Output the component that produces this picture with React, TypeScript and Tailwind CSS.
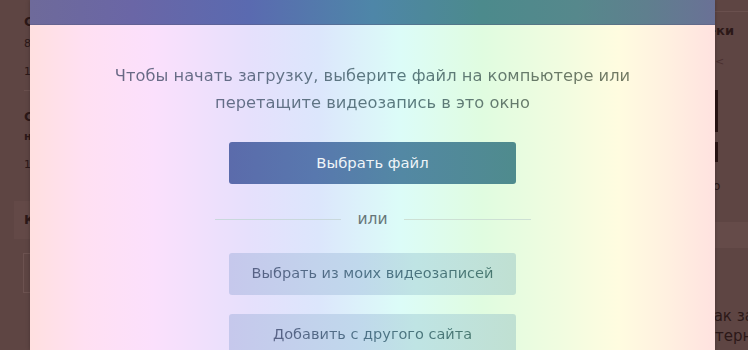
import React from "react";

const font = { fontFamily: '"DejaVu Sans", Verdana, sans-serif' };

export default function App() {
  return (
    <div
      className="relative w-[748px] h-[350px] overflow-hidden bg-[#5e4543]"
      style={font}
    >
      {/* background page (dimmed) */}
      <div className="flex h-full text-[#2c1818] font-bold text-[13px]">
        <div className="w-[300px] shrink-0 pl-[24px] flex flex-col">
          <div className="mt-[14px] leading-[16px]">Сделать видео</div>
          <div className="mt-[8px] leading-[12px] text-[11px] font-normal">8 видеозаписей</div>
          <div className="mt-[16px] leading-[12px] text-[11px] font-normal">1 минута</div>
          <div className="mt-[12px] h-px bg-[#6a504e] w-[200px]" />
          <div className="mt-[18px] leading-[16px]">Совет</div>
          <div className="mt-[6px] leading-[12px] text-[11px]">но как</div>
          <div className="mt-[16px] leading-[12px] text-[11px] font-normal">1 час</div>
          <div className="mt-[30px] h-[38px] bg-[#634947] flex items-center pl-[6px] -ml-[10px]">
            <span className="pl-[4px]">Категории</span>
          </div>
          <div className="mt-[14px] h-[40px] border border-[#6c5250] -ml-[1px]" />
        </div>
        <div className="grow" />
        <div className="w-[60px] shrink-0 flex flex-col">
          <div className="mt-[11px] h-px bg-[#6a504e]" />
          <div className="mt-[12px] pr-[14px] leading-[14px] flex justify-end whitespace-nowrap">
            <span>Медиа-ки</span>
          </div>
          <div className="mt-[18px] pl-[27px] text-[11px] font-normal text-[#4a3030] leading-[12px]">&lt;</div>
          <div className="mt-[22px] pl-[27px] flex flex-col gap-[10px]">
            <div className="w-[3px] h-[42px] bg-[#2a1414]" />
            <div className="w-[3px] h-[20px] bg-[#2a1414]" />
          </div>
          <div className="mt-[18px] pl-[25px] text-[12px] font-normal leading-[12px]">о</div>
          <div className="mt-[30px] h-[26px] bg-[#654b49]" />
          <div className="mt-[58px] pl-[15px] text-[15px] font-normal leading-[20px] whitespace-nowrap">
            Как за
          </div>
          <div className="pl-[6px] text-[15px] font-normal leading-[20px] whitespace-nowrap">
            Интерн
          </div>
        </div>
      </div>

      {/* modal */}
      <div className="absolute left-[30px] top-0 w-[685px] h-[350px] flex flex-col shadow-[0_0_4px_rgba(0,0,0,0.25)]">
        <div className="h-[25px] shrink-0 bg-[linear-gradient(90deg,#6e6a9a_0%,#6a66a6_15%,#5a6ab0_32%,#4e86a8_50%,#4c8a8c_66%,#56888c_80%,#5f7f8e_90%,#6a7196_100%)] border-b border-[#5a5a7a]/40" />
        <div className="grow flex flex-col items-center bg-[linear-gradient(90deg,#ffe0e0_0%,#ffe0f2_8%,#fbe0fc_18%,#e6e0fc_32%,#dce6fc_42%,#dcfcf8_54%,#e0fce0_66%,#f0fce0_77%,#fffce0_86%,#fff0e0_93%,#ffe2e0_100%)]">
          <p className="mt-[37px] text-[16.3px] leading-[27px] text-center bg-[linear-gradient(90deg,#6c6682_0%,#646e88_30%,#587a7e_55%,#687a68_75%,#7a785e_100%)] bg-clip-text text-transparent px-[70px] whitespace-nowrap">
            Чтобы начать загрузку, выберите файл на компьютере или
            <br />
            перетащите видеозапись в это окно
          </p>

          <button className="mt-[26px] w-[287px] h-[42px] shrink-0 rounded-[3px] bg-[linear-gradient(90deg,#5b6bab_0%,#5878ae_30%,#5388a4_60%,#4f8b8d_100%)] text-[#eef4f8] text-[14.8px]">
            Выбрать файл
          </button>

          <div className="mt-[25px] h-[20px] w-[316px] flex items-center gap-[16px]">
            <div className="grow h-px bg-[#c9d8dc]" />
            <span className="text-[15.5px] leading-[20px] text-[#667678]">или</span>
            <div className="grow h-px bg-[#cde0d4]" />
          </div>

          <button className="mt-[24px] w-[287px] h-[42px] shrink-0 rounded-[3px] bg-[linear-gradient(90deg,#c6c8ec_0%,#c0d8ec_45%,#bfe4e4_65%,#c0e0d2_100%)] text-[14.5px]">
            <span className="bg-[linear-gradient(90deg,#586286_0%,#4c7286_50%,#487870_100%)] bg-clip-text text-transparent">
              Выбрать из моих видеозаписей
            </span>
          </button>

          <button className="mt-[19px] w-[287px] h-[42px] shrink-0 rounded-[3px] bg-[linear-gradient(90deg,#c6c8ec_0%,#c0d8ec_45%,#bfe4e4_65%,#c0e0d2_100%)] text-[14.5px]">
            <span className="bg-[linear-gradient(90deg,#586286_0%,#4c7286_50%,#487870_100%)] bg-clip-text text-transparent">
              Добавить с другого сайта
            </span>
          </button>
        </div>
      </div>
    </div>
  );
}
